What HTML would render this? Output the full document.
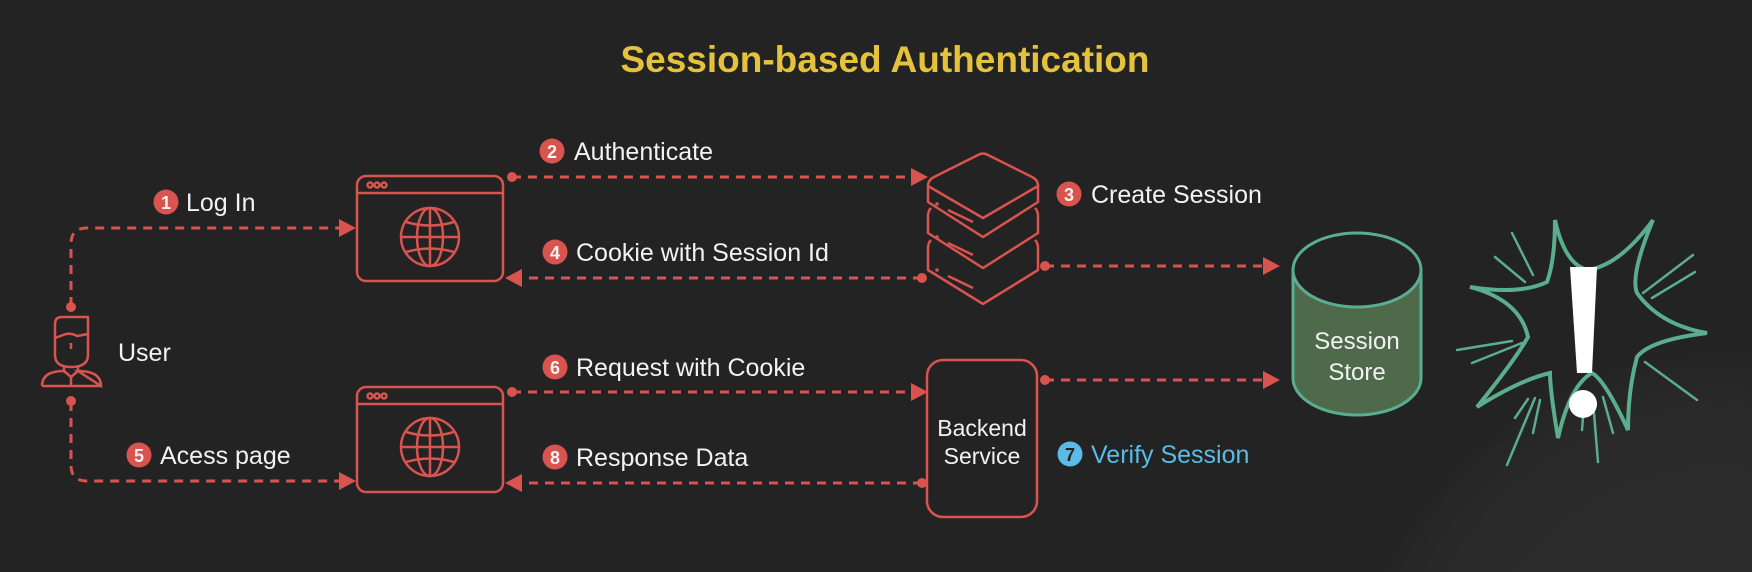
<!DOCTYPE html>
<html><head><meta charset="utf-8"><style>
html,body{margin:0;padding:0;background:#232323;}
svg{display:block;}
text{font-family:"Liberation Sans",sans-serif;}
</style></head><body>
<svg width="1752" height="572" viewBox="0 0 1752 572" xmlns="http://www.w3.org/2000/svg">
<defs>
<radialGradient id="g" cx="1720" cy="720" r="380" gradientUnits="userSpaceOnUse">
<stop offset="0" stop-color="#2e2e2e"/><stop offset="0.8" stop-color="#2a2a2a"/><stop offset="1" stop-color="#232323"/>
</radialGradient>
</defs>
<rect width="1752" height="572" fill="#232323"/>
<rect width="1752" height="572" fill="url(#g)"/>

<text x="885" y="72" text-anchor="middle" font-size="37" font-weight="bold" fill="#e5c23c">Session-based Authentication</text>

<g stroke="#d9534f" stroke-width="3" fill="none" stroke-dasharray="9 7">
<path d="M71 306 V244 Q71 228 87 228 H341"/>
<path d="M71 402 V465 Q71 481 87 481 H341"/>
<path d="M512 177 H913"/>
<path d="M922 278 H519"/>
<path d="M1045 266 H1265"/>
<path d="M512 392 H913"/>
<path d="M922 483 H519"/>
<path d="M1045 380 H1265"/>
</g>
<g fill="#d9534f">
<path d="M339 219 L356 228 L339 237Z"/>
<path d="M339 472 L356 481 L339 490Z"/>
<path d="M911 168 L928 177 L911 186Z"/>
<path d="M522 269 L505 278 L522 287Z"/>
<path d="M1263 257 L1280 266 L1263 275Z"/>
<path d="M911 383 L928 392 L911 401Z"/>
<path d="M522 474 L505 483 L522 492Z"/>
<path d="M1263 371 L1280 380 L1263 389Z"/>
<circle cx="71" cy="307" r="5"/><circle cx="71" cy="401" r="5"/>
<circle cx="512" cy="177" r="5"/><circle cx="922" cy="278" r="5"/>
<circle cx="1045" cy="266" r="5"/><circle cx="512" cy="392" r="5"/>
<circle cx="922" cy="483" r="5"/><circle cx="1045" cy="380" r="5"/>
</g>

<g stroke="#d9534f" stroke-width="2.5" fill="none">
<rect x="357" y="176" width="146" height="105" rx="9"/>
<line x1="357" y1="193" x2="503" y2="193"/>
<circle cx="370" cy="185" r="2.5"/><circle cx="377" cy="185" r="2.5"/><circle cx="384" cy="185" r="2.5"/>
<g transform="translate(430,237)">
<circle r="29"/><ellipse rx="13" ry="29"/><line x1="0" y1="-29" x2="0" y2="29"/><line x1="-29" y1="0" x2="29" y2="0"/>
<path d="M-24 -15 Q0 -8 24 -15 M-24 15 Q0 8 24 15"/>
</g>
<rect x="357" y="387" width="146" height="105" rx="9"/>
<line x1="357" y1="404" x2="503" y2="404"/>
<circle cx="370" cy="396" r="2.5"/><circle cx="377" cy="396" r="2.5"/><circle cx="384" cy="396" r="2.5"/>
<g transform="translate(430,447)">
<circle r="29"/><ellipse rx="13" ry="29"/><line x1="0" y1="-29" x2="0" y2="29"/><line x1="-29" y1="0" x2="29" y2="0"/>
<path d="M-24 -15 Q0 -8 24 -15 M-24 15 Q0 8 24 15"/>
</g>

<path d="M55 324 Q55 317 62 317 H88 V355 Q88 367 71 367 Q55 367 55 355 Z"/>
<path d="M55 338 L66 334 Q72 333 77 336 L88 334"/>
<line x1="71" y1="343" x2="71" y2="349"/>
<path d="M64 365 V371 L71 377 L78 371 V365"/>
<path d="M42 386 Q42 371 64 371 M78 371 Q101 371 101 386 Z M42 386 H101 M71 377 V386"/>

<path d="M928 186 Q928 180 934 177 L978 155 Q983 152 988 155 L1032 177 Q1038 180 1038 186 L983 218 Z"/>
<path d="M928 186 V202 L983 237 L1038 202 V186"/>
<path d="M931 208 Q928 211 928 216 V233 L983 268 L1038 233 V216 Q1038 211 1035 208"/>
<path d="M931 240 Q928 243 928 248 V270 L983 304 L1038 270 V248 Q1038 243 1035 240"/>
<path d="M948 210 L973 222 M948 243 L973 255 M948 276 L973 288"/>

<rect x="927" y="360" width="110" height="157" rx="16"/>
</g>
<g fill="#d9534f"><circle cx="937" cy="204" r="1.8"/><circle cx="937" cy="237" r="1.8"/><circle cx="937" cy="270" r="1.8"/></g>

<path d="M1293 270 V378 A64 37 0 0 0 1421 378 V270 Z" fill="#4e6a4b" stroke="#5aad8f" stroke-width="3"/>
<ellipse cx="1357" cy="270" rx="64" ry="37" fill="#232323" stroke="#5aad8f" stroke-width="3"/>
<text x="1357" y="349" text-anchor="middle" font-size="24" fill="#f2f2f2">Session</text>
<text x="1357" y="380" text-anchor="middle" font-size="24" fill="#f2f2f2">Store</text>

<text x="982" y="436" text-anchor="middle" font-size="23" fill="#f2f2f2">Backend</text>
<text x="982" y="464" text-anchor="middle" font-size="23" fill="#f2f2f2">Service</text>

<g stroke="#5aad8f" fill="none" stroke-linecap="round">
<path stroke-width="4" d="M1555 220 Q1565 265 1588 270 Q1620 265 1653 220 Q1630 275 1637 293 Q1660 325 1707 333 Q1650 340 1637 357 Q1628 390 1628 430 Q1605 380 1592 373 Q1570 385 1558 438 Q1550 390 1550 373 Q1520 380 1477 407 Q1515 360 1528 337 Q1520 300 1470 287 Q1520 295 1547 282 Q1555 260 1555 220 Z"/>
<g stroke-width="2.5">
<path d="M1512 233L1533 275M1495 257L1525 282M1693 255L1643 293M1695 272L1652 298M1457 350L1512 341M1472 363L1522 343M1645 362L1697 400M1507 465L1535 398M1515 418L1528 399M1533 433L1540 400M1598 462L1594 413M1613 433L1603 397M1582 430L1583 417"/>
</g>
</g>
<path d="M1570 267 H1597 L1592 373 H1577 Z" fill="#ffffff"/>
<circle cx="1583" cy="404" r="14" fill="#ffffff"/>

<g font-size="25" fill="#f2f2f2">
<circle cx="166" cy="202" r="12.5" fill="#d9534f"/><text x="166" y="209" text-anchor="middle" font-size="18" font-weight="bold">1</text>
<text x="186" y="211">Log In</text>
<circle cx="139" cy="455" r="12.5" fill="#d9534f"/><text x="139" y="462" text-anchor="middle" font-size="18" font-weight="bold">5</text>
<text x="160" y="464">Acess page</text>
<text x="118" y="361">User</text>
<circle cx="552" cy="151" r="12.5" fill="#d9534f"/><text x="552" y="158" text-anchor="middle" font-size="18" font-weight="bold">2</text>
<text x="574" y="160">Authenticate</text>
<circle cx="555" cy="252" r="12.5" fill="#d9534f"/><text x="555" y="259" text-anchor="middle" font-size="18" font-weight="bold">4</text>
<text x="576" y="261">Cookie with Session Id</text>
<circle cx="1069" cy="194" r="12.5" fill="#d9534f"/><text x="1069" y="201" text-anchor="middle" font-size="18" font-weight="bold">3</text>
<text x="1091" y="203">Create Session</text>
<circle cx="555" cy="367" r="12.5" fill="#d9534f"/><text x="555" y="374" text-anchor="middle" font-size="18" font-weight="bold">6</text>
<text x="576" y="376">Request with Cookie</text>
<circle cx="555" cy="457" r="12.5" fill="#d9534f"/><text x="555" y="464" text-anchor="middle" font-size="18" font-weight="bold">8</text>
<text x="576" y="466">Response Data</text>
<circle cx="1070" cy="454" r="12.5" fill="#5bbbe8"/><text x="1070" y="461" text-anchor="middle" font-size="18" font-weight="bold" fill="#232323">7</text>
<text x="1091" y="463" fill="#5bbbe8">Verify Session</text>
</g>
</svg>
</body></html>
